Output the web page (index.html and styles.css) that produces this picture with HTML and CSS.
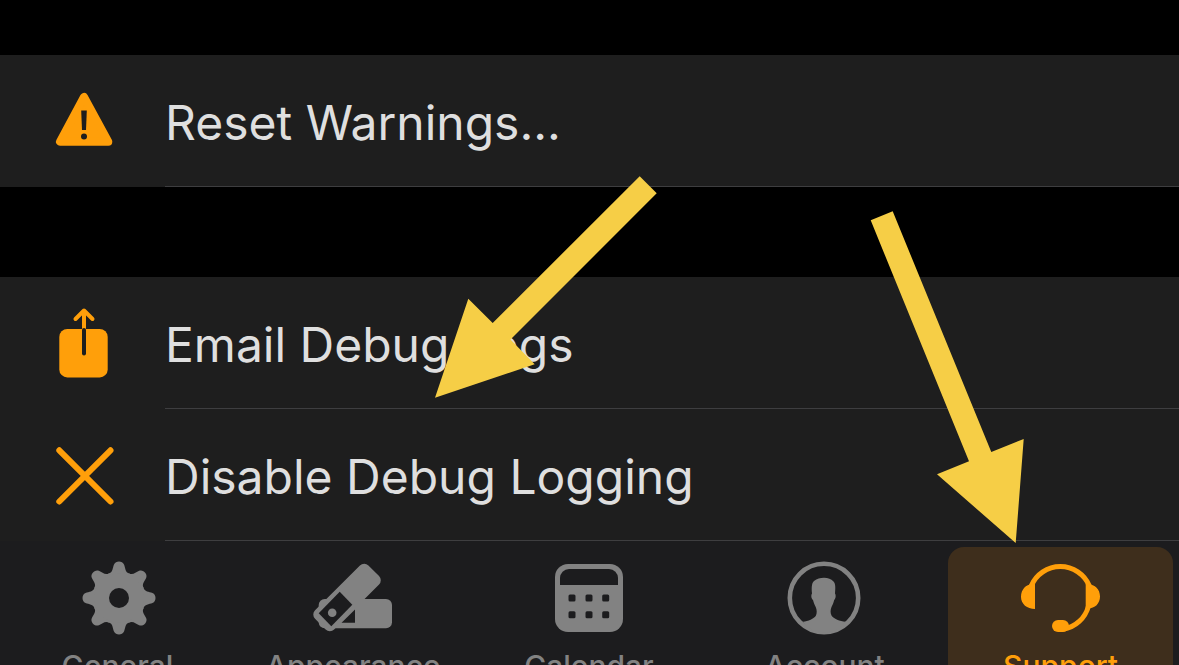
FILE: index.html
```html
<!DOCTYPE html>
<html lang="en">
<head>
<meta charset="utf-8">
<meta name="viewport" content="width=device-width, initial-scale=1">
<title>Support</title>
<link rel="stylesheet" href="styles.css">
</head>
<body>
<div class="screen">
  <main class="settings">
    <section class="group">
      <button class="row" type="button">
        <svg class="row-icon" viewBox="48 85 72 72" aria-hidden="true">
          <path class="fill join" d="M84 97 60 141.7H108.300Z"/>
          <path class="cut" d="M81.200 110.500H86.800L86 130H82Z"/>
          <circle class="cut" cx="84" cy="136.500" r="3"/>
        </svg>
        <span class="row-label">Reset Warnings...</span>
      </button>
    </section>
    <section class="group">
      <button class="row" type="button">
        <svg class="row-icon" viewBox="48 307 72 72" aria-hidden="true">
          <rect class="fill" x="59.300" y="329" width="48.400" height="48.400" rx="8"/>
          <path class="line" d="M84 329V310.500M75.500 319 84 310.500 92.500 319"/>
          <path class="cut-line" d="M84 330V353.500"/>
        </svg>
        <span class="row-label">Email Debug Logs</span>
      </button>
      <button class="row" type="button">
        <svg class="row-icon" viewBox="48 439 72 72" aria-hidden="true">
          <path class="line heavy" d="M59.300 450.300 110.500 501.500M110.500 450.300 59.300 501.500"/>
        </svg>
        <span class="row-label">Disable Debug Logging</span>
      </button>
    </section>
  </main>

  <nav class="tabs" aria-label="Settings sections">
    <button class="tab" type="button">
      <svg class="tab-icon" viewBox="-42 -40 80 80" aria-hidden="true">
        <defs><path id="tooth" d="M-10.500 -24.500C-6 -25.500 -6.500 -30 -5 -33.500C-3.300 -37.500 3.300 -37.500 5 -33.500C6.500 -30 6 -25.500 10.500 -24.500L0 0Z"/></defs>
        <g fill="currentColor">
          <use href="#tooth"/>
          <use href="#tooth" transform="rotate(45)"/>
          <use href="#tooth" transform="rotate(90)"/>
          <use href="#tooth" transform="rotate(135)"/>
          <use href="#tooth" transform="rotate(180)"/>
          <use href="#tooth" transform="rotate(225)"/>
          <use href="#tooth" transform="rotate(270)"/>
          <use href="#tooth" transform="rotate(315)"/>
          <circle r="25"/>
        </g>
        <circle class="tab-cut" r="10"/>
      </svg>
      <span class="tab-label">General</span>
    </button>
    <button class="tab" type="button">
      <svg class="tab-icon" viewBox="313 558 80 80" aria-hidden="true">
        <rect fill="currentColor" x="318.700" y="599" width="73.300" height="29.300" rx="6"/>
        <path class="tab-cut" d="M355 609.500V622.700H341.500Z"/>
        <rect fill="currentColor" x="309.300" y="584" width="75.500" height="27" rx="6" transform="rotate(-45 347 597.500)"/>
        <path class="tab-cut" d="M339.700 591.700 352.300 604.800 331.300 626.300 318.700 613.300Z"/>
        <circle fill="currentColor" cx="332.200" cy="612.700" r="4.300"/>
      </svg>
      <span class="tab-label">Appearance</span>
    </button>
    <button class="tab" type="button">
      <svg class="tab-icon" viewBox="549 558 80 80" aria-hidden="true">
        <rect fill="currentColor" x="555" y="564" width="68" height="68" rx="13"/>
        <path class="tab-cut" d="M560 585V578A9 9 0 0 1 569 569H609A9 9 0 0 1 618 578V585Z"/>
        <g class="tab-cut">
          <rect x="568.500" y="594.500" width="7" height="7" rx="1.500"/>
          <rect x="585.500" y="594.500" width="7" height="7" rx="1.500"/>
          <rect x="602.200" y="594.500" width="7" height="7" rx="1.500"/>
          <rect x="568.500" y="611.200" width="7" height="7" rx="1.500"/>
          <rect x="585.500" y="611.200" width="7" height="7" rx="1.500"/>
          <rect x="602.200" y="611.200" width="7" height="7" rx="1.500"/>
        </g>
      </svg>
      <span class="tab-label">Calendar</span>
    </button>
    <button class="tab" type="button">
      <svg class="tab-icon" viewBox="785 558 80 80" aria-hidden="true">
        <circle cx="824" cy="598" r="34.200" fill="none" stroke="currentColor" stroke-width="4.600"/>
        <path fill="currentColor" d="M803 621.800C808 621 814 619 816 615.500C817 613 817 610 815.700 607C814.300 604 813.500 602 813 600C811.500 599 810.700 595.500 812 593.500C811.500 588 811.500 583 814 581C817 578.500 820 577.700 824 577.700C828 577.700 831.500 579 833 581C835.800 583 835.500 588 835 593.500C836.300 595.500 835.500 599 834.200 600C833.700 602 833 604 831.500 607C830.300 610 830.300 613 831.500 615.500C833.500 619 840 621 845.500 621.800C841 628 833 632.500 824 632.500C815 632.500 808 628.500 803 621.800Z"/>
      </svg>
      <span class="tab-label">Account</span>
    </button>
    <button class="tab tab-active" type="button" aria-current="page">
      <svg class="tab-icon" viewBox="1021 558 80 80" aria-hidden="true">
        <path fill="none" stroke="currentColor" stroke-width="5" d="M1031.200 586A31.500 31.500 0 0 1 1089.400 586M1088.500 606A31.500 31.500 0 0 1 1063 629.300"/>
        <path fill="currentColor" d="M1035 583.500V609C1027 609 1021 604 1021 597C1021 589.500 1026 584.300 1032 584.300ZM1085.700 583.500V609L1088 608.500C1095 608.500 1100 603.500 1100 596.500C1100 589.500 1095 584.300 1088 584.300Z"/>
        <rect fill="currentColor" x="1052" y="620" width="17" height="12" rx="6"/>
      </svg>
      <span class="tab-label">Support</span>
    </button>
  </nav>

  <svg class="pointers" viewBox="0 0 1179 665" aria-hidden="true">
    <path d="M639.700 176.300 656.700 193.300 510.500 339.500 534.700 364.300 435 397.700 468.300 298.700 492.700 323Z"/>
    <path d="M892.700 211.300 991.300 452 1023.700 439 1015.700 543 937 474.300 969 461.300 870.700 220.300Z"/>
  </svg>
</div>
</body>
</html>
```
FILE: styles.css
```css
:root {
  --row: #1e1e1e;
  --bar: #1c1c1e;
  --line: #3e3e40;
  --accent: #ff9f0a;
  --muted: #828282;
}

* {
  box-sizing: border-box;
}

body {
  margin: 0;
  background: #000;
  font-family: Inter, "Liberation Sans", sans-serif;
}

button {
  border: 0;
  margin: 0;
  padding: 0;
  background: none;
  font: inherit;
  color: inherit;
}

.screen {
  position: relative;
  display: flex;
  flex-direction: column;
  height: 100vh;
  overflow: hidden;
}

.settings {
  display: flex;
  flex-direction: column;
  flex-shrink: 0;
  gap: 90px;
  padding-top: 55px;
}

.group {
  background: var(--row);
}

.row {
  display: flex;
  align-items: center;
  gap: 45px;
  width: 100%;
  height: 132px;
  padding-left: 48px;
  text-align: left;
}

.row-icon {
  flex: none;
  width: 72px;
  height: 72px;
}

.row-label {
  flex: 1;
  align-self: stretch;
  border-bottom: 1px solid var(--line);
  color: #dfdfdf;
  font-size: 48px;
  line-height: 136px;
  white-space: nowrap;
}

.fill {
  fill: var(--accent);
}

.join {
  stroke: var(--accent);
  stroke-width: 8px;
  stroke-linejoin: round;
}

.cut {
  fill: var(--row);
}

.line,
.cut-line {
  fill: none;
  stroke: var(--accent);
  stroke-width: 4px;
  stroke-linecap: round;
  stroke-linejoin: round;
}

.cut-line {
  stroke: var(--row);
}

.heavy {
  stroke-width: 6px;
}

.tabs {
  display: grid;
  grid-template-columns: repeat(5, 1fr);
  flex: 1 0 auto;
  background: var(--bar);
  color: var(--muted);
}

.tab {
  display: flex;
  flex-direction: column;
  align-items: center;
  gap: 10px;
  margin: 6px 6px 0 5px;
  padding: 11px 0 12px;
  border-radius: 16px;
}

.tab-active {
  background: #3e2e1c;
  color: var(--accent);
}

.tab-icon {
  flex: none;
  width: 80px;
  height: 80px;
  overflow: visible;
}

.tab-cut {
  fill: var(--bar);
}

.tab-label {
  font-size: 30px;
  font-weight: 500;
  line-height: 36px;
}

.pointers {
  position: absolute;
  top: 0;
  left: 0;
  width: 100%;
  fill: #f6ce46;
  pointer-events: none;
}
```
